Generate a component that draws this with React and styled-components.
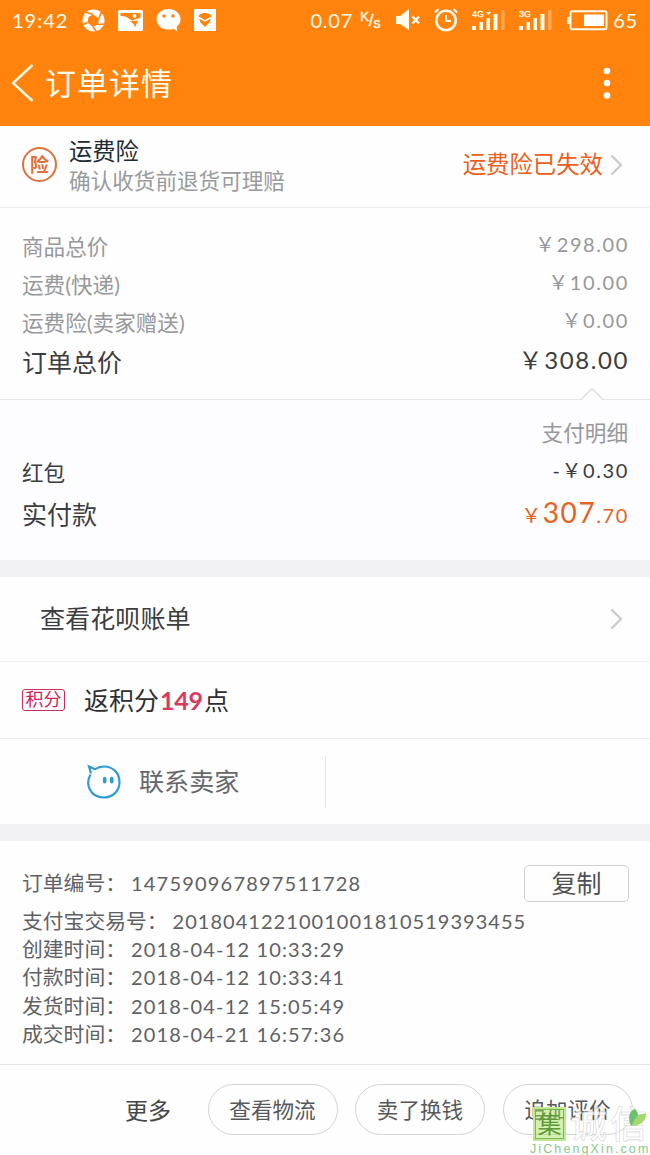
import styled, { createGlobalStyle } from 'styled-components';

const GlobalStyle = createGlobalStyle`
  * {
    box-sizing: border-box;
  }

  body {
    margin: 0;
    background: #fefefe;
    font-family: Lato, "Noto Sans CJK SC", sans-serif;
  }
`;

const Page = styled.main`
  position: relative;
  width: 650px;
  height: 1155px;
  overflow: hidden;
  background: #fefefe;
  color: #3c3d40;
  white-space: nowrap;
`;

const Text = styled.span`
  display: block;
  font-size: ${props => props.$size || 21.6}px;
  line-height: ${props => props.$leading || 1.4};
  color: ${props => props.$color || 'inherit'};
  letter-spacing: ${props => props.$spacing || 0}px;
  margin-left: ${props => props.$push || 0};
`;

const Header = styled.header`
  height: 126px;
  background: #ff830d;
  color: #fffbea;
`;

const StatusBar = styled.div`
  display: flex;
  align-items: center;
  height: 40px;
  padding: 0 12px;
`;

const StatusIcons = styled.div`
  display: flex;
  align-items: center;
  gap: 13px;
  margin-left: 14px;
`;

const StatusRight = styled.div`
  display: flex;
  align-items: center;
  margin-left: auto;
`;

const Speed = styled.span`
  display: flex;
  width: 23px;
  height: 20px;
  margin: 0 12px 0 7px;
  font-family: "Liberation Sans", sans-serif;
  line-height: 1;
`;

const SpeedPart = styled.span`
  margin-top: ${props => props.$drop || 0}px;
  font-size: ${props => props.$size || 13}px;
  -webkit-text-stroke: 0.4px currentColor;
`;

const AlarmIcon = styled.svg`
  margin-left: 13px;
`;

const Signals = styled.div`
  display: flex;
  gap: 14px;
  margin: 0 15px 0 14px;
`;

const TitleBar = styled.div`
  display: flex;
  align-items: center;
  height: 86px;
  padding: 0 39px 0 11px;
`;

const Title = styled.h1`
  margin: 0 auto 0 11px;
  font-size: 31px;
  font-weight: 400;
  letter-spacing: 1px;
  line-height: 40px;
`;

const Insurance = styled.section`
  display: flex;
  align-items: center;
  height: 82px;
  padding: 0 27px 4px 22px;
  border-bottom: 1px solid #ececee;
`;

const InsuranceBadge = styled.span`
  display: grid;
  place-items: center;
  width: 35px;
  height: 35px;
  margin-right: 12px;
  padding-bottom: 1px;
  border: 2px solid #e0703c;
  border-radius: 50%;
  color: #e0703c;
  font-size: 19px;
  font-weight: 700;
  line-height: 1;
`;

const InsuranceText = styled.div`
  margin-right: auto;
  padding-top: 2px;
`;

const Chevron = styled.svg`
  flex: none;
  margin-left: ${props => props.$gap || 0}px;
`;

const Totals = styled.section`
  position: relative;
  height: 192px;
  padding: 20px 22px 0;
  border-bottom: 1px solid #e6e6e9;
`;

const Notch = styled.svg`
  position: absolute;
  right: 46px;
  bottom: -2px;
`;

const PriceRow = styled.div`
  display: flex;
  justify-content: space-between;
  align-items: center;
  height: ${props => props.$height || 38}px;
  color: ${props => props.$color || '#3c3d40'};
`;

const Amount = styled.div`
  display: flex;
  align-items: baseline;
  justify-content: flex-end;
  margin: ${props => props.$lift ?? -7}px -1px 0 auto;
  color: ${props => props.$color || 'inherit'};
  font-size: ${props => props.$size || 20}px;
  line-height: 1.4;
  letter-spacing: ${props => props.$spacing || 1.6}px;
`;

const Big = styled.span`
  font-size: 28px;
`;

const Payment = styled.section`
  height: 160px;
  padding: 14px 22px 0;
  background: #fdfcff;
`;

const Gap = styled.div`
  height: 17px;
  background: #f2f1f4;
`;

const BillLink = styled.section`
  display: flex;
  align-items: center;
  justify-content: space-between;
  height: 85px;
  padding: 0 27px 0 40px;
  border-bottom: 1px solid #efeff1;
`;

const Points = styled.section`
  display: flex;
  align-items: center;
  height: 77px;
  padding-left: 22px;
  border-bottom: 1px solid #ebebed;
  color: #2e2f32;
`;

const PointsTag = styled.span`
  width: 43px;
  height: 22px;
  margin-right: 19px;
  border: 1px solid #c9305f;
  border-radius: 3px;
  color: #cf2358;
  font-size: 18px;
  line-height: 19px;
  text-align: center;
`;

const PointsValue = styled.b`
  margin: 0 1px;
  color: #d83a5e;
  letter-spacing: -0.2px;
`;

const Contact = styled.section`
  display: flex;
  align-items: center;
  height: 85px;
`;

const ContactSeller = styled.div`
  display: flex;
  align-items: center;
  gap: 17px;
  width: 326px;
  height: 52px;
  padding-left: 86px;
  border-right: 1px solid #e4e4e6;
  color: #66676a;
`;

const OrderInfo = styled.section`
  height: 224px;
  padding: 23px 21px 0 22px;
  border-bottom: 1px solid #e4e4e6;
  color: #606164;
`;

const InfoRow = styled.div`
  display: flex;
  align-items: center;
  height: ${props => props.$height || 28.3}px;
  margin-top: ${props => props.$top || 0}px;
`;

const InfoLabel = styled.span`
  font-size: 20.8px;
  margin-right: 5px;
  line-height: 28px;
`;

const InfoValue = styled.span`
  font-size: 20px;
  line-height: 28px;
  letter-spacing: ${props => props.$spacing}px;
`;

const CopyButton = styled.button`
  width: 105px;
  height: 37px;
  margin-left: auto;
  padding: 0;
  border: 1px solid #cfcfd2;
  border-radius: 5px;
  background: transparent;
  color: #505154;
  font: inherit;
  font-size: 25px;
  line-height: 1;
`;

const Actions = styled.footer`
  display: flex;
  align-items: center;
  height: 90px;
  padding-left: 125px;
`;

const MoreButton = styled.button`
  width: 82.5px;
  padding: 0 0 2px;
  border: 0;
  background: none;
  color: #444548;
  font: inherit;
  font-size: 23px;
  text-align: left;
`;

const PillButton = styled.button`
  flex: none;
  width: 130px;
  height: 51px;
  margin: -1px 17.5px 0 0;
  padding: 0 0 2px;
  border: 1px solid #d3d3d6;
  border-radius: 26px;
  background: transparent;
  color: #57585b;
  font: inherit;
  font-size: 21.6px;
`;

const Watermark = styled.div`
  position: absolute;
  left: 530px;
  top: 1106px;
  width: 120px;
`;

const WatermarkTop = styled.div`
  display: flex;
  align-items: center;
  height: 35px;
`;

const WatermarkSeal = styled.span`
  display: grid;
  place-items: center;
  width: 35px;
  height: 34px;
  margin: 0 4px 0 3px;
  background: rgba(165, 225, 95, 0.5);
  box-shadow: inset 0 0 0 2px rgba(200, 240, 150, 0.9), inset 0 0 0 3px rgba(110, 165, 70, 0.8);
  color: #5f9a3a;
  font-size: 24px;
  line-height: 1;
`;

const WatermarkName = styled.span`
  color: rgba(255, 255, 255, 0.75);
  font-size: 37px;
  font-weight: 500;
  line-height: 34px;
  letter-spacing: 3px;
  -webkit-text-stroke: 0.6px rgba(190, 188, 194, 0.7);
`;

const Leaves = styled.svg`
  position: absolute;
  right: 3px;
  top: 2px;
`;

const WatermarkUrl = styled.span`
  display: block;
  font-family: "Liberation Sans", sans-serif;
  font-size: 12.5px;
  line-height: 17px;
  letter-spacing: 2.1px;
  color: #8cc68d;
`;

const Arrow = ({ gap }) => (
  <Chevron $gap={gap} width="13" height="22" viewBox="0 0 13 22" fill="none" stroke="#c9c9cc" strokeWidth="2.2">
    <path d="M1.5 1.5 11 11 1.5 20.5" />
  </Chevron>
);

const Signal = ({ label, data }) => (
  <svg width="33" height="24" viewBox="0 0 33 24" fill="#fffbea">
    <text x="0" y="9" fontSize="9" fontFamily="Liberation Sans" stroke="#fffbea" strokeWidth=".3">{label}</text>
    {data && <path d="M14 4h5l-2.5 3z" />}
    <rect x="0" y="18" width="4" height="4" />
    <rect x="7.5" y="14" width="3.5" height="8" />
    <rect x="14.5" y="10" width="3.5" height="12" />
    <rect x="21.5" y="6" width="4" height="16" />
    <rect x="29" y="2" width="3.5" height="20" opacity="0.3" />
  </svg>
);

const NotificationIcons = () => (
  <StatusIcons>
    <svg width="23" height="23" viewBox="0 0 23 23">
      <circle cx="11.5" cy="11.5" r="11" fill="#fff" />
      <path d="M11 5.500 17 9.500 16 15.500 11 18 5.500 13.500 6.500 8Z" fill="#ff830d" />
      <path d="M11 5.500 3.500 3M17 9.500 19.500 2.500M16 15.500 22.500 15M11 18 15 23M5.500 13.500 0 16" stroke="#ff830d" strokeWidth="1.600" />
    </svg>
    <svg width="25" height="21" viewBox="0 0 25 21">
      <rect width="25" height="21" rx="1.500" fill="#fff" />
      <path d="M2.500 6V3H22.500V7.500L14.500 10.500C10.500 9 8.500 5.500 2.500 6Z" fill="#ff830d" />
      <path d="M11.500 11.500 20 10.500 17 17.500C16.500 14.500 15 12.500 11.500 11.500Z" fill="#ff830d" />
      <circle cx="16.500" cy="6" r="1.900" fill="#fff" />
    </svg>
    <svg width="25" height="23" viewBox="0 0 25 23">
      <path d="M12.500 0C5.600 0 .5 4.500.5 10.200c0 5.800 5 10.400 12 10.400 1.900 0 3.600-.2 5-.8l3.800 2.400-.6-4.500c2.400-1.900 3.800-4.500 3.800-7.500C24.500 4.500 19.400 0 12.500 0Z" fill="#fff" />
      <circle cx="8" cy="7" r="1.700" fill="#ff830d" />
      <circle cx="17" cy="7" r="1.700" fill="#ff830d" />
    </svg>
    <svg width="22" height="22" viewBox="0 0 22 22">
      <rect width="22" height="22" rx="1" fill="#fff" />
      <path d="M4.500 8C5 2.800 17 2.800 17.500 8L15.500 13.500 11 18 6.500 13.500Z" fill="#ff830d" />
      <path d="M5 8.500 11 11.800 17 8.500" fill="none" stroke="#fff" strokeWidth="1.500" />
    </svg>
  </StatusIcons>
);

const prices = [
  { label: '商品总价', value: '￥298.00' },
  { label: '运费(快递)', value: '￥10.00' },
  { label: '运费险(卖家赠送)', value: '￥0.00' },
];

const times = [
  { label: '创建时间：', value: '2018-04-12 10:33:29' },
  { label: '付款时间：', value: '2018-04-12 10:33:41' },
  { label: '发货时间：', value: '2018-04-12 15:05:49' },
  { label: '成交时间：', value: '2018-04-21 16:57:36' },
];

const App = () => (
  <>
    <GlobalStyle />
    <Page>
      <Header>
        <StatusBar>
          <Text $size={20} $spacing={1}>19:42</Text>
          <NotificationIcons />
          <StatusRight>
            <Text $size={20} $spacing={0.8}>0.07</Text>
            <Speed>
              <SpeedPart>K</SpeedPart>
              <SpeedPart $drop={2} $size={17}>/</SpeedPart>
              <SpeedPart $drop={6} $size={14}>s</SpeedPart>
            </Speed>
            <svg width="26" height="22" viewBox="0 0 26 22" fill="#fffbea">
              <path d="M1 7h4l9-7v21l-9-6H1Z" />
              <path d="M17.500 7.500 24 14.500M24 7.500 17.500 14.500" stroke="#fffbea" strokeWidth="2.400" />
            </svg>
            <AlarmIcon width="24" height="24" viewBox="0 0 24 24" fill="none" stroke="#fffbea" strokeWidth="2.600">
              <circle cx="12" cy="12.500" r="9.700" />
              <path d="M12 7v6h5" strokeWidth="2" />
              <path d="M1 4.500 4.500 1M19.500 1 23 4.500" strokeWidth="2" />
            </AlarmIcon>
            <Signals>
              <Signal label="4G" data />
              <Signal label="3G" />
            </Signals>
            <svg width="41" height="21" viewBox="0 0 41 21">
              <rect x="3.500" y="1.200" width="36" height="18" rx="2" fill="none" stroke="#fffbea" strokeWidth="2" />
              <path d="M0 7h3v7H0Z" fill="#fffbea" />
              <rect x="17" y="4.500" width="20" height="11.500" fill="#fff" />
            </svg>
            <Text $size={20} $spacing={0.8} $push="5px">65</Text>
          </StatusRight>
        </StatusBar>
        <TitleBar>
          <svg width="23" height="38" viewBox="0 0 23 38" fill="none" stroke="#fffbea" strokeWidth="2.400">
            <path d="M21.500 1 2 19 21.500 37" />
          </svg>
          <Title>订单详情</Title>
          <svg width="8" height="32" viewBox="0 0 8 32" fill="#fff">
            <circle cx="4" cy="4" r="3.300" />
            <circle cx="4" cy="16" r="3.300" />
            <circle cx="4" cy="28.500" r="3.300" />
          </svg>
        </TitleBar>
      </Header>

      <Insurance>
        <InsuranceBadge>险</InsuranceBadge>
        <InsuranceText>
          <Text $size={23.3} $color="#1c2b36" $leading="30px">运费险</Text>
          <Text $color="#999a9d" $leading="30px">确认收货前退货可理赔</Text>
        </InsuranceText>
        <Text $size={23.4} $color="#ea5f1c">运费险已失效</Text>
        <Arrow gap={7} />
      </Insurance>

      <Totals>
        {prices.map(item => (
          <PriceRow key={item.label} $color="#97989b">
            <Text>{item.label}</Text>
            <Amount>{item.value}</Amount>
          </PriceRow>
        ))}
        <PriceRow $height={40}>
          <Text $size={25}>订单总价</Text>
          <Amount $size={24} $lift={-5}>￥308.00</Amount>
        </PriceRow>
        <Notch width="24" height="14" viewBox="0 0 24 14">
          <path d="M.5 13 12 1.500 23.500 13" fill="#fdfcff" stroke="#dfdfe2" strokeWidth="1.500" />
        </Notch>
      </Totals>

      <Payment>
        <PriceRow $color="#97989b">
          <Text $push="auto">支付明细</Text>
        </PriceRow>
        <PriceRow $height={42}>
          <Text>红包</Text>
          <Amount>-￥0.30</Amount>
        </PriceRow>
        <PriceRow $height={41}>
          <Text $size={25}>实付款</Text>
          <Amount $color="#e2641f" $lift={-3}>￥<Big>307</Big>.70</Amount>
        </PriceRow>
      </Payment>

      <Gap />

      <BillLink>
        <Text $size={25.1}>查看花呗账单</Text>
        <Arrow />
      </BillLink>

      <Points>
        <PointsTag>积分</PointsTag>
        <Text $size={25}>返积分<PointsValue>149</PointsValue>点</Text>
      </Points>

      <Contact>
        <ContactSeller>
          <svg width="36" height="36" viewBox="0 0 36 36" fill="none" stroke="#2f9bd3" strokeWidth="2.200">
            <path d="M4.500 10.500C-1 20 4 33.500 17.500 33.500 27 33.500 33.500 27 33.500 18 33.500 9 27 2.500 18 2.500 14 2.500 11.500 3.500 9 5.200L3 2.500 5 9.500" />
            <path d="M18.700 14.500v3.200M25.700 14.500v3.200" strokeWidth="3.600" strokeLinecap="round" />
          </svg>
          <Text $size={25.1}>联系卖家</Text>
        </ContactSeller>
      </Contact>

      <Gap />

      <OrderInfo>
        <InfoRow $height={38}>
          <InfoLabel>订单编号：</InfoLabel>
          <InfoValue $spacing={1.2}>147590967897511728</InfoValue>
          <CopyButton>复制</CopyButton>
        </InfoRow>
        <InfoRow $height={28} $top={5}>
          <InfoLabel>支付宝交易号：</InfoLabel>
          <InfoValue $spacing={1.03}>2018041221001001810519393455</InfoValue>
        </InfoRow>
        {times.map(item => (
          <InfoRow key={item.label}>
            <InfoLabel>{item.label}</InfoLabel>
            <InfoValue $spacing={1.15}>{item.value}</InfoValue>
          </InfoRow>
        ))}
      </OrderInfo>

      <Actions>
        <MoreButton>更多</MoreButton>
        <PillButton>查看物流</PillButton>
        <PillButton>卖了换钱</PillButton>
        <PillButton>追加评价</PillButton>
      </Actions>

      <Watermark>
        <WatermarkTop>
          <WatermarkSeal>集</WatermarkSeal>
          <WatermarkName>诚信</WatermarkName>
        </WatermarkTop>
        <WatermarkUrl>JiChengXin.com</WatermarkUrl>
        <Leaves width="18" height="19" viewBox="0 0 18 19">
          <path d="M2 18C-2 9 1 2 6 1c5 5 4 11-4 17Z" fill="#6cc070" />
          <path d="M3 18C6 8 11 5 17 6c0 8-7 12-14 12Z" fill="#a4d86c" />
        </Leaves>
      </Watermark>
    </Page>
  </>
);

export default App;
